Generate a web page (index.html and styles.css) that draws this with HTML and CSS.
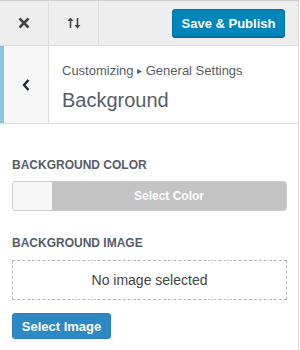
FILE: index.html
```html
<!DOCTYPE html>
<html>
<head>
<meta charset="utf-8">
<link rel="stylesheet" href="styles.css">
</head>
<body>
<div class="panel">
  <div class="topbar">
    <div class="tb-btn">
      <svg width="12" height="12" viewBox="0 0 12 12"><path d="M1.5 1.5 L10.5 10.5 M10.5 1.5 L1.5 10.5" stroke="#444" stroke-width="2.6" stroke-linecap="butt"/></svg>
    </div>
    <div class="tb-btn">
      <svg width="16" height="14" viewBox="0 0 16 14"><path d="M4.5 12 V3" stroke="#444" stroke-width="1.6"/><path d="M1.5 5 L4.5 1.5 L7.5 5 Z" fill="#444"/><path d="M11.5 2 V11" stroke="#444" stroke-width="1.6"/><path d="M8.5 9 L11.5 12.5 L14.5 9 Z" fill="#444"/></svg>
    </div>
    <div class="tb-spacer"></div>
    <button class="publish">Save &amp; Publish</button>
  </div>
  <div class="section-head">
    <div class="back">
      <svg width="10" height="14" viewBox="0 0 10 14"><path d="M7.5 2 L3 7 L7.5 12" stroke="#1e2a36" stroke-width="2.4" fill="none"/></svg>
    </div>
    <div class="titles">
      <div class="crumb">Customizing <span class="caret">&#9656;</span> General Settings</div>
      <div class="title">Background</div>
    </div>
  </div>
  <div class="content">
    <div class="label">Background Color</div>
    <div class="color-picker">
      <span class="swatch"></span>
      <span class="select-color">Select Color</span>
    </div>
    <div class="label label-2">Background Image</div>
    <div class="placeholder">No image selected</div>
    <button class="select-image">Select Image</button>
  </div>
</div>
</body>
</html>
```
FILE: styles.css
```css
html, body {
  margin: 0;
  padding: 0;
  background: #fff;
}
body {
  font-family: "Liberation Sans", Arial, sans-serif;
  color: #555d66;
}
.panel {
  width: 299px;
  height: 350px;
  border-right: 1px solid #ddd;
  border-top: 1px solid #ccc;
  box-sizing: border-box;
  background: #fff;
}
.topbar {
  display: flex;
  align-items: center;
  height: 44px;
  background: #eee;
  border-bottom: 1px solid #ddd;
}
.tb-btn {
  width: 48px;
  height: 44px;
  border-right: 1px solid #ddd;
  display: flex;
  align-items: center;
  justify-content: center;
}
.tb-btn + .tb-btn {
  width: 49px;
}
.tb-spacer {
  flex: 1;
}
.publish {
  margin-right: 13px;
  height: 28px;
  width: 113px;
  padding: 0;
  background: #0085ba;
  border: 1px solid #0073aa;
  border-radius: 3px;
  color: #fff;
  font-family: "Liberation Sans", Arial, sans-serif;
  font-weight: bold;
  font-size: 13px;
  box-shadow: 0 1px 0 #006799;
}
.section-head {
  display: flex;
  height: 77px;
  border-bottom: 1px solid #ddd;
}
.back {
  width: 44px;
  border-left: 4px solid #8bc4de;
  border-right: 1px solid #ddd;
  background: #f7f7f7;
  display: flex;
  align-items: center;
  justify-content: center;
}
.titles {
  padding: 17px 0 0 13px;
}
.crumb {
  font-size: 13px;
  color: #555d66;
  line-height: 16px;
}
.caret {
  font-size: 10px;
  position: relative;
  top: -1px;
}
.title {
  font-size: 20px;
  color: #555d66;
  margin-top: 8px;
  line-height: 24px;
}
.content {
  padding: 34px 11px 0 12px;
}
.label {
  font-size: 12px;
  font-weight: bold;
  text-transform: uppercase;
  color: #555d66;
  line-height: 14px;
}
.label-2 {
  margin-top: 25px;
}
.color-picker {
  display: flex;
  margin-top: 9px;
  height: 30px;
  border: 1px solid #ccc;
  border-radius: 3px;
  overflow: hidden;
  box-sizing: border-box;
}
.swatch {
  width: 39px;
  background: #f7f7f7;
}
.select-color {
  flex: 1;
  background: #c3c3c3;
  color: #fff;
  font-weight: bold;
  font-size: 12px;
  display: flex;
  align-items: center;
  justify-content: center;
}
.placeholder {
  margin-top: 10px;
  height: 40px;
  border: 1px dashed #b4b9be;
  box-sizing: border-box;
  display: flex;
  align-items: center;
  justify-content: center;
  font-size: 14px;
  color: #444;
}
.select-image {
  margin-top: 13px;
  height: 26px;
  width: 99px;
  padding: 0;
  background: #2d89c4;
  border: 1px solid #2a7fb8;
  border-radius: 3px;
  color: #fff;
  font-family: "Liberation Sans", Arial, sans-serif;
  font-weight: bold;
  font-size: 13px;
}
```
